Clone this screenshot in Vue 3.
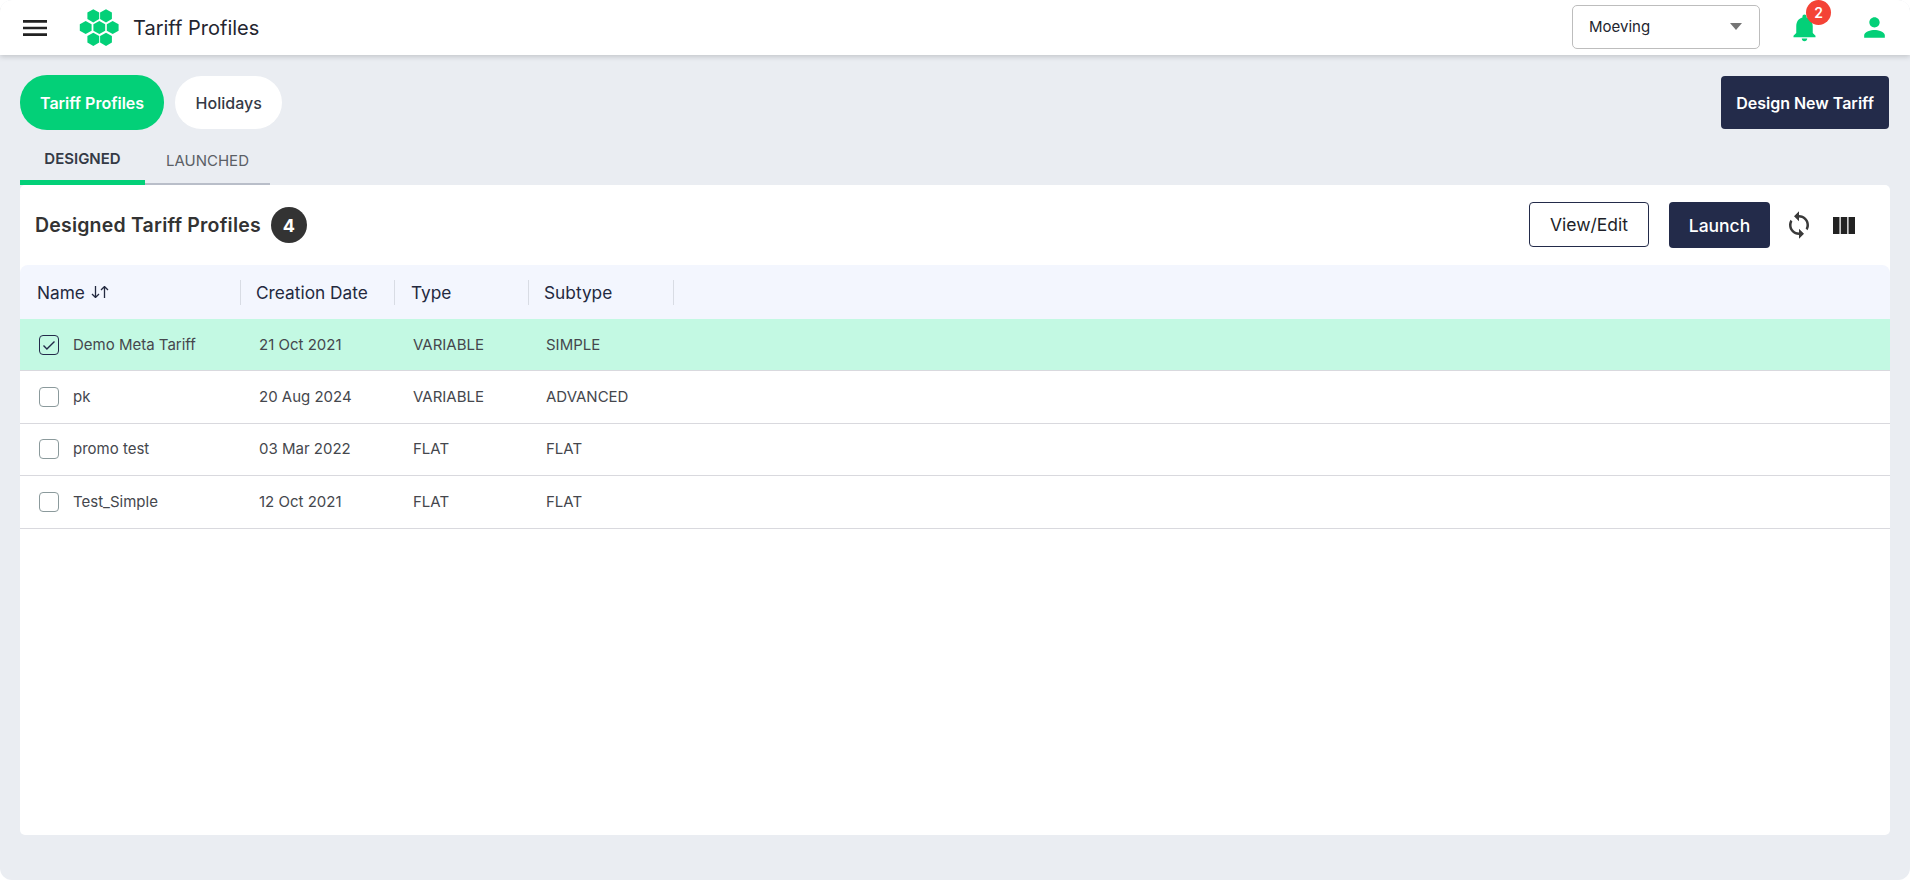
<script setup>
const rows = [
  { name: 'Demo Meta Tariff', date: '21 Oct 2021', type: 'VARIABLE', subtype: 'SIMPLE', selected: true },
  { name: 'pk', date: '20 Aug 2024', type: 'VARIABLE', subtype: 'ADVANCED' },
  { name: 'promo test', date: '03 Mar 2022', type: 'FLAT', subtype: 'FLAT' },
  { name: 'Test_Simple', date: '12 Oct 2021', type: 'FLAT', subtype: 'FLAT' },
]
const hexes = [
  [14.3, 6.8], [27, 6.8], [6.7, 18.5], [20.3, 18.5], [33.7, 18.5], [14.3, 30.3], [27, 30.3],
]
const hexPoints = (cx, cy) =>
  [[0, -6.6], [5.9, -3.3], [5.9, 3.3], [0, 6.6], [-5.9, 3.3], [-5.9, -3.3]]
    .map(([x, y]) => `${cx + x},${cy + y}`)
    .join(' ')
</script>

<template>
  <div class="page">
    <header class="topbar">
      <div class="brand">
        <svg class="menu" viewBox="3 6 18 12" width="24" height="16"><path d="M3 18h18v-2H3v2zm0-5h18v-2H3v2zm0-7v2h18V6H3z" /></svg>
        <svg class="logo" viewBox="0 0 40 37" width="40" height="37">
          <polygon v-for="(h, i) in hexes" :key="i" :points="hexPoints(h[0], h[1])" />
        </svg>
        <span class="app-title">Tariff Profiles</span>
      </div>
      <div class="actions">
        <div class="select"><span>Moeving</span><i class="caret"></i></div>
        <div class="bell">
          <svg viewBox="0 0 24 24" width="33" height="33"><path d="M12 22c1.1 0 2-.9 2-2h-4c0 1.1.9 2 2 2zm6-6v-5c0-3.07-1.63-5.64-4.5-6.32V4c0-.83-.67-1.5-1.5-1.5s-1.5.67-1.5 1.5v.68C7.64 5.36 6 7.92 6 11v5l-2 2v1h16v-1l-2-2z" /></svg>
          <span class="count">2</span>
        </div>
        <svg class="user" viewBox="0 0 24 24" width="31" height="31"><path d="M12 12c2.21 0 4-1.79 4-4s-1.79-4-4-4-4 1.79-4 4 1.79 4 4 4zm0 2c-2.67 0-8 1.34-8 4v2h16v-2c0-2.66-5.33-4-8-4z" /></svg>
      </div>
    </header>

    <main class="content">
      <div class="pills-row">
        <div class="pills">
          <button class="pill active">Tariff Profiles</button>
          <button class="pill">Holidays</button>
        </div>
        <button class="design-btn">Design New Tariff</button>
      </div>

      <nav class="tabs">
        <span class="tab current">DESIGNED</span>
        <span class="tab">LAUNCHED</span>
      </nav>

      <section class="card">
        <div class="card-head">
          <div class="heading">
            <h2>Designed Tariff Profiles</h2>
            <span class="total">4</span>
          </div>
          <div class="tools">
            <button class="outline">View/Edit</button>
            <button class="solid">Launch</button>
            <svg class="sync" viewBox="0 0 24 24" width="30" height="30"><path d="M12 4V1L8 5l4 4V6c3.31 0 6 2.69 6 6 0 1.01-.25 1.97-.7 2.8l1.46 1.46C19.54 15.03 20 13.57 20 12c0-4.42-3.58-8-8-8zm0 14c-3.31 0-6-2.69-6-6 0-1.01.25-1.97.7-2.8L5.24 7.74C4.46 8.97 4 10.43 4 12c0 4.42 3.58 8 8 8v3l4-4-4-4v3z" /></svg>
            <svg class="cols" viewBox="4 5 17 13" width="22" height="17"><path d="M10 18h5V5h-5v13zm-6 0h5V5H4v13zM16 5v13h5V5h-5z" /></svg>
          </div>
        </div>

        <div class="table">
          <div class="thead">
            <div class="th">
              Name
              <svg class="sort" viewBox="0 0 18 12" width="18" height="12" fill="none" stroke="currentColor" stroke-width="1.3">
                <path d="M4.5 0v11.5M1 8l3.5 3.5L8 8" />
                <path d="M13.5 12V.5M10 4l3.5-3.5L17 4" />
              </svg>
            </div>
            <div class="th">Creation Date</div>
            <div class="th">Type</div>
            <div class="th">Subtype</div>
          </div>
          <div v-for="row in rows" :key="row.name" class="tr" :class="{ selected: row.selected }">
            <div class="td name-cell">
              <span class="check">
                <svg v-if="row.selected" viewBox="0 0 14 14" width="14" height="14" fill="none" stroke="#232b4a" stroke-width="1.4"><path d="M1.5 7.5l3.4 3.4L12.5 3.4" /></svg>
              </span>
              <span>{{ row.name }}</span>
            </div>
            <div class="td">{{ row.date }}</div>
            <div class="td">{{ row.type }}</div>
            <div class="td">{{ row.subtype }}</div>
          </div>
        </div>
      </section>
    </main>
  </div>
</template>

<style>
html, body { background: #fff; }
</style>

<style scoped>
* { box-sizing: border-box; }
.page {
  width: 1910px;
  height: 880px;
  background: #eaedf2;
  border-radius: 12px;
  overflow: hidden;
  font-family: Inter, "Liberation Sans", sans-serif;
  color: #23252f;
}
button { font-family: inherit; cursor: pointer; }

.topbar {
  height: 55px;
  background: #fff;
  box-shadow: 0 2px 5px rgba(0, 0, 0, 0.16);
  display: flex;
  justify-content: space-between;
  align-items: center;
  padding: 0 20px 0 23px;
  position: relative;
}
.brand { display: flex; align-items: center; }
.menu { fill: #222; margin-right: 32px; }
.logo { fill: #03d078; margin-right: 14px; }
.app-title { font-size: 20px; line-height: 24px; color: #23252f; }
.actions { display: flex; align-items: center; }
.select {
  width: 188px;
  height: 44px;
  margin-bottom: 2px;
  border: 1px solid #bdbdbd;
  border-radius: 5px;
  display: flex;
  align-items: center;
  justify-content: space-between;
  padding: 0 17px 0 16px;
  font-size: 15px;
  margin-right: 28px;
}
.caret {
  width: 0;
  height: 0;
  border-left: 6px solid transparent;
  border-right: 6px solid transparent;
  border-top: 7px solid #757575;
}
.bell { position: relative; width: 33px; height: 33px; margin-right: 38px; }
.bell svg { fill: #03d078; display: block; }
.count {
  position: absolute;
  top: -11px;
  left: 18px;
  width: 25px;
  height: 25px;
  border-radius: 50%;
  background: #f44336;
  color: #fff;
  font-size: 14px;
  font-weight: 600;
  display: flex;
  align-items: center;
  justify-content: center;
}
.user { fill: #03d078; }

.content { padding: 20px 20px 0; }
.pills-row { display: flex; justify-content: space-between; align-items: center; height: 55px; }
.pills { display: flex; align-items: center; gap: 11px; }
.pill {
  height: 53px;
  padding: 0 20.5px;
  border: 0;
  border-radius: 27px;
  background: #fff;
  color: #343a46;
  font-size: 16px;
  font-weight: 500;
}
.pill.active { height: 55px; padding: 0 20px; background: #03d078; color: #fff; font-weight: 600; }
.design-btn {
  width: 168px;
  height: 53px;
  border: 0;
  border-radius: 4px;
  background: #232b4a;
  color: #fff;
  font-size: 16px;
  font-weight: 600;
  margin-right: 1px;
}

.tabs {
  display: flex;
  width: 250px;
  height: 55px;
  border-bottom: 2px solid #b9bec9;
}
.tab {
  width: 125px;
  height: 55px;
  text-align: center;
  padding-top: 21px;
  font-size: 15px;
  line-height: 20px;
  color: #5b5f66;
}
.tab.current {
  border-bottom: 5px solid #03d078;
  color: #343a46;
  font-weight: 600;
  padding-top: 19px;
}

.card {
  height: 650px;
  background: #fff;
  border-radius: 5px;
}
.card-head {
  height: 80px;
  display: flex;
  justify-content: space-between;
  align-items: center;
  padding: 0 35px 0 15px;
}
.heading { display: flex; align-items: center; gap: 10px; }
h2 { margin: 0; font-size: 19.5px; letter-spacing: 0.2px; font-weight: 600; color: #333; }
.total {
  width: 36px;
  height: 36px;
  border-radius: 50%;
  background: #333;
  color: #fff;
  font-size: 18px;
  font-weight: 700;
  display: flex;
  align-items: center;
  justify-content: center;
}
.tools { display: flex; align-items: center; }
.outline, .solid {
  border-radius: 4px;
  font-size: 17.5px;
}
.outline {
  width: 120px;
  height: 45px;
  margin-bottom: 1px;
  background: #fff;
  border: 1px solid #232b4a;
  color: #1d1f29;
  font-weight: 400;
  margin-right: 20px;
}
.solid {
  width: 101px;
  height: 46px;
  background: #232b4a;
  border: 0;
  color: #fff;
  font-weight: 500;
  margin-right: 14px;
}
.sync { fill: #3a3a3a; margin-right: 19px; }
.cols { fill: #222; }

.thead, .tr {
  display: grid;
  grid-template-columns: 221px 154px 134px 145px 1fr;
}
.thead {
  height: 54px;
  background: #f3f6fe;
  border-radius: 8px 8px 0 0;
  align-items: center;
}
.th {
  height: 25px;
  display: flex;
  align-items: center;
  gap: 6px;
  padding-left: 17px;
  font-size: 17.3px;
  line-height: 25px;
  border-right: 1px solid #d8dce4;
  color: #23293f;
}
.th:nth-child(2), .th:nth-child(4) { padding-left: 15px; }
.th:nth-child(3) { padding-left: 16px; }
.sort { color: #23293f; }
.tr { height: 52.4px; border-bottom: 1.5px solid #d9d9de; align-items: center; }
.tr.selected { background: #c3f9e3; }
.td { font-size: 15px; color: #45474d; padding: 0 0 1px 18px; }
.td:nth-child(4) { padding-left: 17px; }
.name-cell { display: flex; align-items: center; padding: 0 0 0 19px; gap: 14px; }
.name-cell span:last-child { padding-bottom: 1px; }
.check {
  width: 20px;
  height: 20px;
  border: 1.8px solid #8b9a9c;
  border-radius: 4px;
  display: flex;
  align-items: center;
  justify-content: center;
}
.selected .check { border-color: #232b4a; }
</style>
